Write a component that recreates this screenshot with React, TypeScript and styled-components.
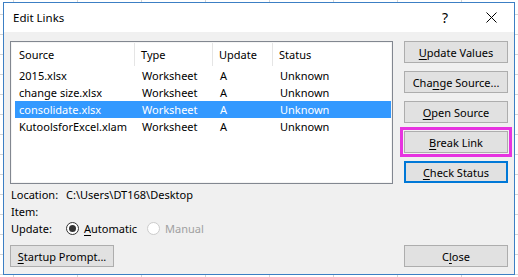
import styled, { createGlobalStyle } from 'styled-components';

const GlobalStyle = createGlobalStyle`
    html, body {
        margin: 0;
        padding: 0;
    }
    body {
        width: 518px;
        height: 277px;
        overflow: hidden;
        font-family: "Noto Sans", "Liberation Sans", sans-serif;
        font-size: 11px;
        color: #000;
        background-color: #fff;
        background-image:
            linear-gradient(to right, #d4d4d4 1px, transparent 1px),
            linear-gradient(to bottom, #d4d4d4 1px, transparent 1px);
        background-size: 64px 20px;
        background-position: 13px 14px;
    }
`

const DialogStyle = styled.div`
    width: 510px;
    height: 271px;
    margin: 2px 0 0 3px;
    border: 1px solid #3c7fc4;
    background: #f0f0f0;
    display: flex;
    flex-direction: column;
`

const TitleBarStyle = styled.div`
    height: 29px;
    background: #fff;
    display: flex;
    align-items: center;
    padding: 0 0 0 9px;
`

const TitleStyle = styled.div`
    flex: 1;
    font-size: 11.5px;
    padding-bottom: 1px;
`

const TitleIconStyle = styled.div`
    width: 46px;
    height: 29px;
    display: flex;
    align-items: center;
    justify-content: center;
    font-size: 14px;
`

const BodyStyle = styled.div`
    flex: 1;
    display: flex;
    flex-direction: column;
    padding: 9px 6px 7px 6px;
`

const TopRowStyle = styled.div`
    display: flex;
    gap: 11px;
`

const ListBoxStyle = styled.div`
    width: 380px;
    height: 140px;
    border: 1px solid #828790;
    box-shadow: inset 0 0 0 1px #f4f4f4;
    background: #fff;
    padding: 1px 1px 0 4px;
`

const GridRow = styled.div<{ $selected?: boolean }>`
    display: grid;
    grid-template-columns: 120px 78px 60px 1fr;
    height: 17px;
    align-items: center;
    background: ${p => p.$selected ? '#3399ff' : 'transparent'};
    color: ${p => p.$selected ? '#fff' : '#000'};
    white-space: nowrap;
`

const HeaderRow = styled(GridRow)`
    height: 23px;
    align-items: stretch;
    margin-bottom: 1px;
`

const HeadCell = styled.div<{ $first?: boolean; $last?: boolean }>`
    display: flex;
    align-items: center;
    padding-left: ${p => p.$first ? '4px' : '6px'};
    border-right: ${p => p.$last ? 'none' : '1px solid #e5e5e5'};
`

const Cell = styled.div<{ $first?: boolean }>`
    padding-left: ${p => p.$first ? '4px' : '7px'};
    overflow: hidden;
`

const ButtonColumnStyle = styled.div`
    display: flex;
    flex-direction: column;
    gap: 8px;
`

const ButtonStyle = styled.button<{ $variant?: 'marked' | 'focused' }>`
    width: 104px;
    height: 22px;
    padding: 0;
    font-family: inherit;
    font-size: 11px;
    color: #000;
    background: #e1e1e1;
    border: ${p => p.$variant === 'focused' ? '2px solid #0078d7' : '1px solid #adadad'};
    outline: ${p => p.$variant === 'marked' ? '3px solid #e733e0' : 'none'};
    outline-offset: 1px;
    u {
        text-decoration-thickness: 1px;
        text-underline-offset: 2px;
    }
`

const InfoStyle = styled.div`
    margin-top: 2px;
    display: flex;
    flex-direction: column;
`

const InfoLine = styled.div`
    height: 17px;
    display: flex;
    align-items: center;
    padding-left: 1px;
`

const InfoLabel = styled.div`
    width: 55px;
`

const RadioStyle = styled.div<{ $disabled?: boolean }>`
    display: flex;
    align-items: center;
    gap: 5px;
    width: ${p => p.$disabled ? 'auto' : '81px'};
    color: ${p => p.$disabled ? '#a0a0a0' : '#000'};
    u {
        text-underline-offset: 2px;
    }
`

const RadioCircle = styled.span<{ $checked?: boolean; $disabled?: boolean }>`
    width: 11px;
    height: 11px;
    border-radius: 50%;
    border: 1px solid ${p => p.$disabled ? '#cccccc' : '#333'};
    background: #fff;
    display: flex;
    align-items: center;
    justify-content: center;
    &::after {
        content: '';
        width: 7px;
        height: 7px;
        border-radius: 50%;
        background: ${p => p.$checked ? '#333' : 'transparent'};
    }
`

const BottomRowStyle = styled.div`
    margin-top: auto;
    display: flex;
    justify-content: space-between;
`

const rows = [
    { source: '2015.xlsx', type: 'Worksheet', update: 'A', status: 'Unknown' },
    { source: 'change size.xlsx', type: 'Worksheet', update: 'A', status: 'Unknown' },
    { source: 'consolidate.xlsx', type: 'Worksheet', update: 'A', status: 'Unknown', selected: true },
    { source: 'KutoolsforExcel.xlam', type: 'Worksheet', update: 'A', status: 'Unknown' },
]

const App = () => {
    return (
        <>
            <GlobalStyle />
            <DialogStyle>
                <TitleBarStyle>
                    <TitleStyle>Edit Links</TitleStyle>
                    <TitleIconStyle>?</TitleIconStyle>
                    <TitleIconStyle>
                        <svg width="11" height="11" viewBox="0 0 11 11">
                            <path d="M0.5 0.5 L10.5 10.5 M10.5 0.5 L0.5 10.5" stroke="#000" strokeWidth="1" />
                        </svg>
                    </TitleIconStyle>
                </TitleBarStyle>

                <BodyStyle>
                    <TopRowStyle>
                        <ListBoxStyle>
                            <HeaderRow>
                                <HeadCell $first>Source</HeadCell>
                                <HeadCell>Type</HeadCell>
                                <HeadCell>Update</HeadCell>
                                <HeadCell $last>Status</HeadCell>
                            </HeaderRow>
                            {rows.map(r => (
                                <GridRow key={r.source} $selected={r.selected}>
                                    <Cell $first>{r.source}</Cell>
                                    <Cell>{r.type}</Cell>
                                    <Cell>{r.update}</Cell>
                                    <Cell>{r.status}</Cell>
                                </GridRow>
                            ))}
                        </ListBoxStyle>

                        <ButtonColumnStyle>
                            <ButtonStyle><u>U</u>pdate Values</ButtonStyle>
                            <ButtonStyle>Cha<u>n</u>ge Source...</ButtonStyle>
                            <ButtonStyle><u>O</u>pen Source</ButtonStyle>
                            <ButtonStyle $variant="marked"><u>B</u>reak Link</ButtonStyle>
                            <ButtonStyle $variant="focused"><u>C</u>heck Status</ButtonStyle>
                        </ButtonColumnStyle>
                    </TopRowStyle>

                    <InfoStyle>
                        <InfoLine>
                            <InfoLabel>Location:</InfoLabel>
                            <div>C:\Users\DT168\Desktop</div>
                        </InfoLine>
                        <InfoLine>
                            <InfoLabel>Item:</InfoLabel>
                        </InfoLine>
                        <InfoLine>
                            <InfoLabel>Update:</InfoLabel>
                            <RadioStyle>
                                <RadioCircle $checked />
                                <span><u>A</u>utomatic</span>
                            </RadioStyle>
                            <RadioStyle $disabled>
                                <RadioCircle $disabled />
                                <span>Manual</span>
                            </RadioStyle>
                        </InfoLine>
                    </InfoStyle>

                    <BottomRowStyle>
                        <ButtonStyle><u>S</u>tartup Prompt...</ButtonStyle>
                        <ButtonStyle>C<u>l</u>ose</ButtonStyle>
                    </BottomRowStyle>
                </BodyStyle>
            </DialogStyle>
        </>
    )
}

export default App;
